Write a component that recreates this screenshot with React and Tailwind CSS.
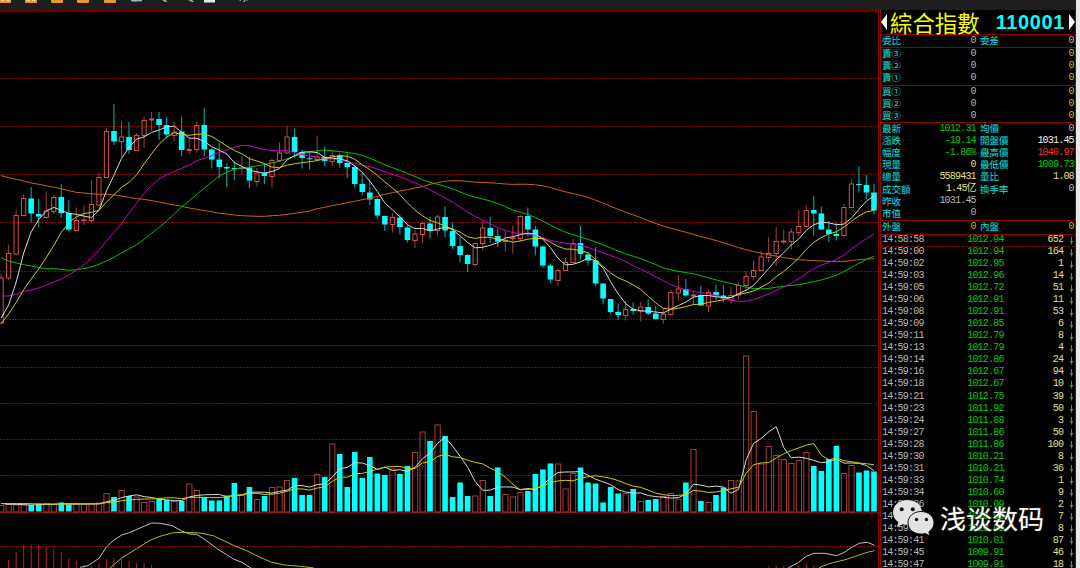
import clsx from 'clsx';

// [direction, high, body top, body bottom, low, volume top]
const candles = [
  ['u', 274, 278, 323, 323, 505.5], ['u', 244.5, 253.5, 278, 280, 504.5], ['u', 210, 215.5, 254, 254, 505],
  ['u', 194, 198.5, 215.5, 216, 505], ['d', 187, 198.5, 213.5, 222.5, 505], ['d', 199, 214, 216.5, 227.5, 503.5],
  ['u', 191.5, 211, 217.5, 218.5, 503.5], ['u', 195, 197.5, 211.5, 214, 504.5], ['d', 184, 197, 213, 218, 502.5],
  ['d', 200, 213, 229.5, 231.5, 504.5], ['u', 207.5, 220.5, 230.5, 230.5, 504], ['u', 205.5, 220, 220.7, 225, 504],
  ['u', 180, 204.5, 220.5, 222, 504], ['u', 172.5, 177.5, 205, 206, 503], ['u', 128, 131.5, 177.5, 177.5, 493.5],
  ['d', 104, 131, 141.5, 145, 497], ['u', 121, 137, 141.5, 157, 490.5], ['d', 122, 137, 150, 154, 496],
  ['u', 133, 135.5, 150.5, 151, 497], ['u', 116.5, 120.5, 135.5, 148, 502.5], ['u', 112, 119, 120, 131, 501.5],
  ['d', 112, 119, 125, 140, 498.5], ['d', 117, 125, 134.5, 138.5, 500], ['u', 122, 132, 135.5, 141, 501.5],
  ['d', 116.5, 131.5, 150, 156.5, 501], ['u', 137.5, 149.5, 150.5, 154.5, 484], ['u', 121.5, 125.5, 149.5, 153, 490.5],
  ['d', 108, 125, 149.5, 156, 497], ['d', 148.5, 149.5, 159.5, 168.5, 500.5], ['d', 142.5, 159.5, 167, 178, 500.5],
  ['d', 163.5, 167, 168.5, 187, 495.5], ['d', 161, 168, 169, 180.5, 483], ['u', 156, 167.7, 168.5, 174.5, 495.5],
  ['d', 157, 167.5, 180.5, 188, 487], ['u', 168, 173, 181.5, 186.5, 499.5], ['d', 163, 173, 176, 184, 496],
  ['u', 158.5, 160.5, 176.5, 187.5, 487.5], ['u', 142.5, 153, 160.5, 162, 487], ['u', 125.5, 137, 153, 154, 480.5],
  ['d', 128.5, 137, 152, 158, 478], ['d', 149.5, 152, 158, 168.5, 495], ['d', 151, 158.3, 159, 169.5, 495],
  ['u', 135.5, 157, 159.5, 161, 474.5], ['d', 146.5, 157, 161, 166.5, 477], ['u', 151, 155.5, 161.5, 166, 444],
  ['d', 153, 155.5, 163, 167.5, 454], ['d', 153.5, 163, 167, 178, 487], ['d', 164.5, 167, 184, 187.5, 452],
  ['d', 173, 184, 192, 195.5, 478], ['d', 179.5, 192.5, 199.5, 205, 457], ['d', 197.5, 199, 215.5, 219, 473.5],
  ['d', 216, 216, 224.5, 231, 475], ['u', 213, 217.5, 224.5, 232.5, 469], ['d', 215, 217.5, 227, 234.5, 474],
  ['d', 225.5, 227.5, 240, 242.5, 466], ['u', 230, 234, 240.5, 248, 452.5], ['u', 221.5, 223.5, 234.5, 243.5, 432],
  ['d', 216.5, 223.5, 230.5, 238.5, 441], ['u', 214.5, 217, 230.5, 235.5, 425], ['d', 206, 217, 230.5, 237.5, 436],
  ['d', 222.5, 231, 246, 249, 497], ['d', 236.5, 246, 255, 262.5, 482.5], ['d', 254, 255, 264, 272, 496],
  ['u', 243.5, 243.5, 264.5, 266.5, 496], ['u', 220.5, 228, 243.5, 250.5, 480.5], ['d', 217, 228, 236, 243, 496],
  ['d', 229, 236, 241.5, 247, 467.5], ['u', 230, 240.3, 241.5, 252, 494.5], ['u', 225.5, 238, 238.7, 253.5, 497],
  ['u', 215, 216.5, 238.5, 241.5, 492.5], ['d', 207.5, 216, 229.5, 236.5, 491], ['d', 226, 229.5, 246.5, 255.5, 474],
  ['d', 245.5, 246.5, 265.5, 267.5, 469.5], ['d', 263.5, 265.5, 279.5, 283, 463.5], ['u', 268.5, 270.5, 280.5, 286.5, 464],
  ['u', 258, 262.5, 270.5, 270.5, 489], ['u', 239, 243.5, 262.5, 262.5, 473.5], ['d', 226, 243, 254, 259.5, 467.5],
  ['d', 251.5, 254.5, 260.5, 265.5, 482.5], ['d', 247, 260.5, 283.5, 286.5, 483.5], ['d', 283.5, 283.5, 298.5, 304.5, 502.5],
  ['d', 299, 299, 312, 314.5, 487], ['d', 303.5, 312, 315, 320, 493.5], ['u', 300.5, 309.5, 315.5, 320.5, 493.5],
  ['d', 302.5, 309, 311, 314.5, 489], ['u', 302, 307, 311, 321.5, 501.5], ['d', 299, 307, 313.5, 315, 500],
  ['d', 305.5, 313.5, 319, 319, 499], ['u', 308, 314, 319.5, 323.5, 496.5], ['u', 290, 292.5, 314.5, 315.5, 493.5],
  ['u', 275, 289, 293, 301, 499], ['d', 279, 289, 295.5, 296.5, 482.5], ['u', 291, 295, 296, 305, 449.5],
  ['d', 286, 295, 305.5, 305.5, 501], ['u', 289.5, 292.5, 306, 312, 502.5], ['d', 285, 292, 295.5, 300, 495],
  ['d', 285.5, 295.5, 298.5, 302, 487.5], ['u', 286.5, 295.5, 300, 303.5, 480.5], ['u', 282, 285.5, 295, 299.5, 481],
  ['u', 271.5, 276.5, 285.5, 290.5, 356], ['u', 261, 270.5, 276.5, 280.5, 411.5], ['u', 250.5, 257, 270.5, 270.5, 464],
  ['u', 237, 253.5, 257.5, 262, 446.5], ['u', 227, 241.5, 253.5, 266, 455.5], ['u', 230, 241, 242, 244, 459.5],
  ['u', 228.5, 232, 241.5, 249.5, 463.5], ['u', 210, 226.5, 232.5, 236.5, 460.5], ['u', 205.5, 210.5, 226.5, 226.5, 452.5],
  ['d', 195.5, 210, 213.5, 235.5, 466], ['d', 206.5, 213.5, 229.5, 229.5, 471], ['d', 221, 229.5, 234, 242, 459],
  ['d', 222.5, 234, 236, 240.5, 446], ['u', 204, 207.5, 235.5, 236.5, 473.5], ['u', 179.5, 184, 207.5, 207.5, 465.5],
  ['d', 166, 184, 185, 192.5, 472.5], ['d', 175, 185, 192.5, 199.5, 470.5], ['d', 183.5, 192.5, 210.5, 214, 471.5],
];

const closes = candles.map((c) => (c[0] === 'u' ? c[2] : c[3]));
const volumes = candles.map((c) => c[5]);

// averages that still depend on days left of the visible range
const head5 = [318, 305, 282, 253];
const head10 = [323.5, 314, 302.5, 289.5, 279, 269, 257.5, 245.5, 232.5];
const head20 = [296, 296, 294.3, 291.3, 290, 288, 285, 282, 279, 275, 270.3, 264.7, 257.7, 250.3, 241, 232.3, 223.3, 213.3, 203.3];
const head30 = [
  257.7, 261, 263, 264.7, 266, 267.7, 268.7, 268.7, 269.3, 270.3, 269.7, 268.7, 267, 264.3, 261,
  257.3, 253, 249, 244.7, 239.3, 233.3, 227.3, 221, 214, 207, 200.7, 194.3, 188, 182,
];
const head60 = [
  175.5, 177.7, 179.3, 181, 183, 184.3, 185.7, 187.3, 188.7, 190.7, 192.3, 193, 193.7, 194.3, 194.3,
  195, 196, 197.3, 198.7, 199.3, 200.7, 202, 203.7, 205, 206.3, 208, 209.3, 210.7, 211.7, 213.3,
  214, 215, 215.7, 216, 216.3, 216.3, 215.7, 215.3, 214.3, 213.3, 212.3, 211, 208.7, 207.3, 205.7,
  204.3, 202.7, 201.3, 199.7, 198.3, 196.3, 194.3, 192.7, 191, 189.7, 188, 186.7, 184.3, 182.7,
];
const volHead5 = [503.5, 504.3, 504.3, 504.7];
const volHead10 = [503.5, 503.5, 503.5, 503.5, 503.7, 504, 504, 504, 504];

const cx = (k) => 1.1 + 7.525 * k;

function average(values, n, head) {
  return values
    .map((_, i) => {
      const y = i < n - 1 ? head[i] : values.slice(i - n + 1, i + 1).reduce((a, b) => a + b, 0) / n;
      return `${cx(i).toFixed(1)},${y.toFixed(1)}`;
    })
    .join(' ');
}

const priceLines = [
  { points: average(closes, 60, head60), color: '#cc6600' },
  { points: average(closes, 30, head30), color: '#00c400' },
  { points: average(closes, 20, head20), color: '#cc00cc' },
  { points: average(closes, 10, head10), color: '#d0d000' },
  { points: average(closes, 5, head5), color: '#d8d8d8' },
];

const volumeLines = [
  { points: average(volumes, 5, volHead5), color: '#d8d8d8' },
  { points: average(volumes, 10, volHead10), color: '#d0d000' },
];

const macdLines = [
  {
    points: '80,567.3 88,565.7 99,558.3 106.7,546.7 114,540 121.7,535 129.3,532.7 144,526.3 151.7,523 160,523.3 172.3,525.7 181.7,531 189.3,534 196.7,534.3 204,539 219,550 226.7,554.7 233.3,559 241.7,562.3 251,568',
    color: '#c0c0c0',
  },
  {
    points: '110,568 121.7,558 136.7,548.7 150,540.3 160,536.3 173.3,532.7 186.7,532.3 200,533 213.3,535.7 233.3,545.3 246.7,550.7 260,557.3 271.7,562.3 285,565 300,566.3 314,568',
    color: '#b8b800',
  },
  {
    points: '788,568 798.7,562.3 806.3,556.3 813.7,553.3 825,553.3 836.7,555.7 844.3,552.3 851.7,547.3 859.3,543.3 867.3,542.3 874.5,545.3',
    color: '#c0c0c0',
  },
  { points: '819,567.7 829,563.7 846.7,559.3 860,554.7 867.3,552.3 874.5,550.7', color: '#b8b800' },
];

// [candle index, top]
const macdBars = [
  [1, 560], [2, 552], [3, 545], [4, 544.5], [5, 545], [6, 547], [7, 548.5], [8, 552], [9, 558], [10, 561],
  [11, 565], [12, 566], [13, 564], [14, 559], [15, 558], [16, 559], [17, 561], [18, 563], [19, 563.5], [20, 565],
  [102, 567], [103, 565.5], [104, 565.5], [105, 566.5], [106, 566], [107, 564], [108, 565],
];

const gridLines = [78.5, 126.5, 174.5, 222.5, 271.5, 319.5, 367.5, 403.5, 439.5, 475.5, 546.5];

const GREY = 'text-[#b8b8b8]';
const WHITE = 'text-[#f0f0f0]';
const GREEN = 'text-[#00cc00]';
const PALE = 'text-[#e0e080]';
const OLIVE = 'text-[#c0c000]';
const RED = 'text-[#f03030]';

const sellRows = ['賣③', '賣②', '賣①'];
const buyRows = ['買①', '買②', '買③'];

const quoteRows = [
  ['最新', '1012.31', GREEN, '均價', '0', GREY],
  ['漲跌', '-19.14', GREEN, '開盤價', '1031.45', WHITE],
  ['幅度', '-1.86%', GREEN, '最高價', '1040.97', RED],
  ['現量', '0', PALE, '最低價', '1009.73', GREEN],
  ['總量', '5589431', PALE, '量比', '1.08', PALE],
  ['成交額', '1.45亿', PALE, '換手率', '0', GREY],
  ['昨收', '1031.45', GREY],
  ['市值', '0', GREY],
];

const ticks = [
  ['14:58:58', '1012.94', 652], ['14:59:00', '1012.94', 164], ['14:59:02', '1012.95', 1], ['14:59:03', '1012.96', 14],
  ['14:59:05', '1012.72', 51], ['14:59:06', '1012.91', 11], ['14:59:08', '1012.91', 53], ['14:59:09', '1012.85', 6],
  ['14:59:11', '1012.79', 8], ['14:59:13', '1012.79', 4], ['14:59:14', '1012.86', 24], ['14:59:16', '1012.67', 94],
  ['14:59:18', '1012.67', 10], ['14:59:21', '1012.75', 39], ['14:59:23', '1011.92', 50], ['14:59:24', '1011.88', 3],
  ['14:59:27', '1011.86', 50], ['14:59:28', '1011.86', 100], ['14:59:30', '1010.21', 8], ['14:59:31', '1010.21', 36],
  ['14:59:33', '1010.74', 1], ['14:59:34', '1010.60', 9], ['14:59:36', '1010.09', 2], ['14:59:37', '1010.09', 7],
  ['14:59:39', '1010.02', 8], ['14:59:41', '1010.01', 87], ['14:59:45', '1009.91', 46], ['14:59:47', '1009.91', 18],
];

function Toolbar() {
  return (
    <svg className="block shrink-0 bg-[#1e1e1e]" width="1076" height="10" viewBox="0 0 1076 10">
      {[-1, 25, 51, 77, 104].map((x) => (
        <rect key={x} x={x} y="-4" width="12" height="7" rx="1" fill="#e8982c" />
      ))}
      <path d="M1 .5h3m2 0h3M27 .5h3m2 0h3" stroke="#f5d9a8" />
      <path d="M131 .5h11" stroke="#8fb8e0" strokeWidth="1.6" />
      <path d="M133 1h4" stroke="#e0a850" />
      <path d="M162 0h4l1 2h-2zM188 0h4l2 2h-2z" fill="#c8a070" />
      <path d="M204 0h11v2.5h-11z" fill="#e4e8ea" />
      <path d="M239.5.5h1.500m3 0h1.500m1 0h1M243 1.500h2" stroke="#989898" />
    </svg>
  );
}

function Candle({ k, data }) {
  const [dir, high, top, bottom, low] = data;
  const x = cx(k);
  if (dir === 'd') {
    return (
      <g fill="#00ffff">
        <rect x={x - 0.6} y={high} width="1.1" height={low - high} opacity="0.65" />
        <rect x={x - 2.8} y={top} width="5.6" height={Math.max(bottom - top, 1)} />
      </g>
    );
  }
  return (
    <g stroke="#d0504c" fill="none">
      <path d={`M${x} ${high}V${top}M${x} ${bottom}V${low}`} opacity="0.8" />
      <rect x={x - 2.1} y={top} width="4.2" height={bottom - top} />
    </g>
  );
}

function Chart() {
  return (
    <svg className="block" width="880" height="558" viewBox="0 10 880 558">
      {gridLines.map((y) => (
        <path key={y} d={`M0 ${y}H878`} stroke="#900000" strokeDasharray="2 1" />
      ))}
      <path d="M0 10.5H878.5V568M0 345.5H878M0 512.5H878" fill="none" stroke="#8c0000" />
      {candles.map((c, k) => (
        <Candle key={k} k={k} data={c} />
      ))}
      {candles.map((c, k) =>
        c[0] === 'd' ? (
          <rect key={k} x={cx(k) - 2.8} y={c[5]} width="5.6" height={511.5 - c[5]} fill="#00ffff" />
        ) : (
          <rect key={k} x={cx(k) - 2.5} y={c[5]} width="5.2" height={512 - c[5]} fill="none" stroke="#a83c3a" />
        )
      )}
      {macdBars.map(([k, y]) => (
        <path key={k} d={`M${cx(k)} ${y}V568`} stroke="#b02420" />
      ))}
      {[...priceLines, ...volumeLines, ...macdLines].map((l, i) => (
        <polyline key={i} points={l.points} fill="none" stroke={l.color} />
      ))}
    </svg>
  );
}

function Num({ className, children }) {
  return (
    <span className={clsx("font-['Liberation_Mono','Noto_Sans_CJK_TC',monospace] text-[10px] leading-[10px] tracking-[-0.8px] mr-[-0.8px]", className)}>
      {children}
    </span>
  );
}

function Row({ label, value, tone = GREY, label2, value2, tone2 = GREY }) {
  return (
    <div className="flex h-[12.05px] items-center gap-[5px] pl-px pr-[2px] text-[#00e4e4]">
      <div className="flex w-[93px] items-center justify-between">
        <span>{label}</span>
        <Num className={tone}>{value}</Num>
      </div>
      <div className="flex flex-1 items-center justify-between">
        <span>{label2}</span>
        <Num className={tone2}>{value2}</Num>
      </div>
    </div>
  );
}

function Tick({ time, price, volume }) {
  return (
    <div className="flex h-[12.02px] items-center pb-[1.4px] pl-px">
      <Num className={clsx('w-[86px]', GREY)}>{time}</Num>
      <Num className={clsx('w-[50px]', GREEN)}>{price}</Num>
      <div className="flex w-[46px] justify-end">
        <Num className={PALE}>{volume}</Num>
      </div>
      <svg className="ml-[7px]" width="5" height="9" viewBox="0 0 5 9" fill="none" stroke="#00cc00">
        <path d="M2.5 1v7.5" />
        <path d="M.5 5h4L2.5 7.500z" fill="#00cc00" stroke="none" />
      </svg>
    </div>
  );
}

function QuotePanel() {
  return (
    <div className="flex w-[196px] flex-col overflow-hidden border-x border-[#8c0000] font-['Noto_Sans_CJK_TC',sans-serif] text-[9.5px] leading-none whitespace-nowrap">
      <div className="flex h-[25px] shrink-0 items-center border-b border-[#8c0000]">
        <svg className="shrink-0" width="6" height="16" viewBox="0 0 6 16" fill="#fff">
          <path d="M6 0v16L0 8z" />
        </svg>
        <span className="ml-[3px] text-[22.4px] leading-[24px] text-[#ffff00]">綜合指數</span>
        <span className="ml-auto font-['Liberation_Sans',sans-serif] text-[20px] leading-[24px] font-bold tracking-[0.6px] text-[#00ffff]">110001</span>
        <svg className="ml-[4px] shrink-0" width="6" height="16" viewBox="0 0 6 16" fill="#fff">
          <path d="M0 0v16l6-8z" />
        </svg>
      </div>
      <div className="h-[13px] shrink-0 border-b border-[#8c0000]">
        <Row label="委比" value="0" label2="委差" value2="0" />
      </div>
      <div className="h-[38px] shrink-0 border-b border-[#8c0000]">
        {sellRows.map((label) => (
          <Row key={label} label={label} value="0" value2="0" tone2={OLIVE} />
        ))}
      </div>
      <div className="h-[37px] shrink-0 border-b border-[#8c0000]">
        {buyRows.map((label) => (
          <Row key={label} label={label} value="0" value2="0" tone2={OLIVE} />
        ))}
      </div>
      <div className="h-[98px] shrink-0 border-b border-[#8c0000]">
        {quoteRows.map(([label, value, tone, label2, value2, tone2]) => (
          <Row key={label} label={label} value={value} tone={tone} label2={label2} value2={value2} tone2={tone2} />
        ))}
      </div>
      <div className="h-[14px] shrink-0 border-b border-[#8c0000]">
        <Row label="外盤" value="0" tone={OLIVE} label2="內盤" value2="0" tone2={OLIVE} />
      </div>
      {ticks.map(([time, price, volume], i) => (
        <div key={time} className={clsx('shrink-0', i === 0 && 'h-[12px] border-b border-dashed border-[#8c0000]')}>
          <Tick time={time} price={price} volume={volume} />
        </div>
      ))}
    </div>
  );
}

function Watermark() {
  return (
    <div className="absolute top-[499px] left-[892px] flex items-center">
      <svg width="43" height="38" viewBox="0 0 43 38">
        <path d="M15.5 1C7 1 1 6.5 1 13.500c0 4 2 7.300 5.300 9.500L5 28l5.500-3c1.600.5 3.300.8 5 .8 8.500 0 14.500-5.300 14.500-12.300S24 1 15.500 1z" fill="#e2e2e2" />
        <circle cx="9.7" cy="10.2" r="2" fill="#111" />
        <circle cx="20.8" cy="10.2" r="2" fill="#111" />
        <path d="M29 12.500c-7.500 0-13 5-13 11.300S21.500 35 29 35c1.500 0 3-.2 4.400-.6l4.600 2.600-1.200-4.200c3.200-2.200 5.200-5.300 5.200-9 0-6.300-5.500-11.300-13-11.300z" fill="#e2e2e2" stroke="#111" />
        <circle cx="24.5" cy="20.5" r="1.7" fill="#111" />
        <circle cx="34.5" cy="20.5" r="1.7" fill="#111" />
      </svg>
      <span className="ml-[5px] font-['Noto_Sans_CJK_SC',sans-serif] text-[26px] leading-[38px] text-white [text-shadow:0_0_2px_#555]">浅谈数码</span>
    </div>
  );
}

export default function App() {
  return (
    <div className="relative flex h-[568px] w-[1080px] overflow-hidden bg-[#e8e8e8]">
      <div className="flex w-[1076px] flex-col bg-black">
        <Toolbar />
        <div className="flex h-[558px]">
          <Chart />
          <QuotePanel />
        </div>
      </div>
      <Watermark />
    </div>
  );
}
